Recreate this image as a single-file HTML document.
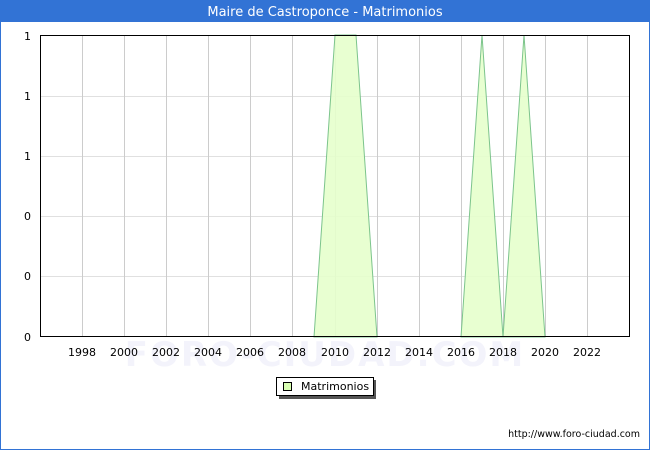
<!DOCTYPE html>
<html><head><meta charset="utf-8"><style>
body{margin:0;width:650px;height:450px;overflow:hidden;background:#fff;font-family:"DejaVu Sans","Liberation Sans",sans-serif}
</style></head><body>
<svg width="650" height="450" xmlns="http://www.w3.org/2000/svg" font-family="DejaVu Sans, Liberation Sans, sans-serif">
<rect x="0" y="0" width="650" height="450" fill="#fff"/>
<rect x="0.5" y="0.5" width="649" height="449" fill="none" stroke="#3273d5"/>
<rect x="0" y="0" width="650" height="22" fill="#3273d5"/>
<text x="325" y="16" fill="#fff" font-size="13" text-anchor="middle">Maire de Castroponce - Matrimonios</text>
<text x="325" y="366" fill="#f3f3fb" font-size="34" text-anchor="middle" font-weight="bold" letter-spacing="2">FORO-CIUDAD.COM</text>
<g stroke="#e0e0e0"><line x1="40" y1="96.5" x2="630" y2="96.5"/><line x1="40" y1="156.5" x2="630" y2="156.5"/><line x1="40" y1="216.5" x2="630" y2="216.5"/><line x1="40" y1="276.5" x2="630" y2="276.5"/></g>
<g stroke="#cccccc">
<line x1="82.5" y1="35" x2="82.5" y2="337"/><line x1="124.5" y1="35" x2="124.5" y2="337"/><line x1="166.5" y1="35" x2="166.5" y2="337"/><line x1="208.5" y1="35" x2="208.5" y2="337"/><line x1="250.5" y1="35" x2="250.5" y2="337"/><line x1="292.5" y1="35" x2="292.5" y2="337"/><line x1="335.5" y1="35" x2="335.5" y2="337"/><line x1="377.5" y1="35" x2="377.5" y2="337"/><line x1="419.5" y1="35" x2="419.5" y2="337"/><line x1="461.5" y1="35" x2="461.5" y2="337"/><line x1="503.5" y1="35" x2="503.5" y2="337"/><line x1="545.5" y1="35" x2="545.5" y2="337"/><line x1="587.5" y1="35" x2="587.5" y2="337"/>
</g>
<g fill="#e6ffcc" fill-opacity="0.9" stroke="#7cc48c" stroke-width="1">
<polygon points="314,337 335,35 356,35 377,337"/>
<polygon points="461,337 482,35 503,337"/>
<polygon points="503,337 524,35 545,337"/>
</g>
<rect x="40.5" y="35.5" width="589" height="301" fill="none" stroke="#000"/>
<g font-size="11" fill="#000" text-anchor="end">
<text x="31" y="40">1</text><text x="31" y="100">1</text><text x="31" y="160">1</text><text x="31" y="220">0</text><text x="31" y="280">0</text><text x="31" y="341">0</text>
</g>
<g font-size="11" fill="#000" text-anchor="middle">
<text x="82" y="356">1998</text><text x="124" y="356">2000</text><text x="166" y="356">2002</text><text x="208" y="356">2004</text><text x="250" y="356">2006</text><text x="292" y="356">2008</text><text x="335" y="356">2010</text><text x="377" y="356">2012</text><text x="419" y="356">2014</text><text x="461" y="356">2016</text><text x="503" y="356">2018</text><text x="545" y="356">2020</text><text x="587" y="356">2022</text>
</g>
<rect x="279" y="380" width="97" height="19" fill="#555"/>
<rect x="276.5" y="377.5" width="97" height="18" fill="#fff" stroke="#000"/>
<rect x="283.5" y="382.5" width="8" height="8" fill="#d9ffb3" stroke="#000"/>
<text x="301" y="390" font-size="11">Matrimonios</text>
<text x="640" y="437" font-size="9.5" text-anchor="end">http://www.foro-ciudad.com</text>
</svg>
</body></html>
